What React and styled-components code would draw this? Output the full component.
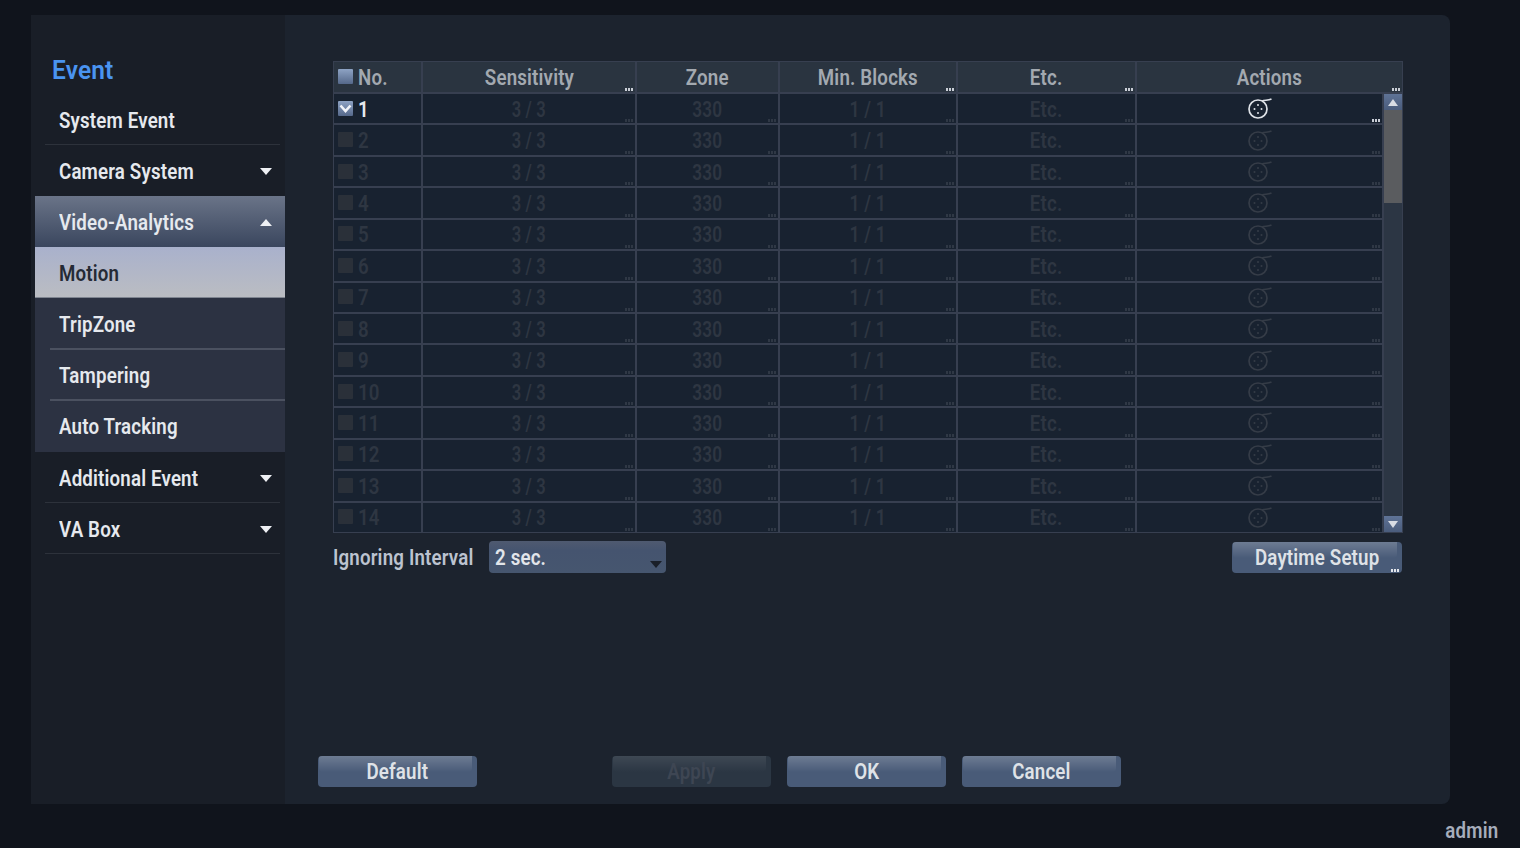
import styled, { createGlobalStyle } from "styled-components";

const COLUMNS = "87px 212px 141px 176px 177px 1fr";
const ROWS = Array.from({ length: 14 }, (_, i) => i + 1);

const GlobalStyle = createGlobalStyle`
  html, body {
    margin: 0;
    padding: 0;
    background: #10141c;
    overflow: hidden;
  }
  body {
    font-family: Roboto, "Liberation Sans", sans-serif;
  }
`;

const Screen = styled.div`
  width: 1520px;
  height: 848px;
  padding: 15px 70px 0 31px;
  box-sizing: border-box;
  position: relative;
`;

const Window = styled.div`
  display: flex;
  height: 789px;
  border-radius: 0 8px 8px 0;
  background: #1c232e;
  overflow: hidden;
`;

const Sidebar = styled.nav`
  width: 254px;
  flex: none;
  background: #191e27;
  padding: 29px 0 0 4px;
  box-sizing: border-box;
`;

const Squeezed = styled.span`
  display: inline-block;
  transform: scaleX(${(p) => p.$scale || 0.85});
  transform-origin: ${(p) => p.$origin || "left"} center;
  white-space: nowrap;
  letter-spacing: 0.2px;
`;

const SideTitle = styled.div`
  height: 50px;
  padding: 1px 0 0 17px;
  box-sizing: border-box;
  font-size: 26px;
  font-weight: 600;
  line-height: 50px;
  color: #4a94f0;
`;

const MenuItem = styled.div`
  position: relative;
  height: ${(p) => (p.$tall ? 52 : 51)}px;
  display: flex;
  align-items: center;
  justify-content: space-between;
  padding: 1px 13px 0 24px;
  box-sizing: border-box;
  font-size: 22px;
  font-weight: 600;
  color: #e6e9ee;

  ${(p) =>
    p.$variant === "open" &&
    `background: linear-gradient(#6a7488, #3a465e);`}
  ${(p) =>
    p.$variant === "selected" &&
    `background: linear-gradient(#a9b1cc, #bbbdc2);
     color: #252a35;
     box-shadow: inset 0 -1px 0 #7f8590;`}
  ${(p) => p.$variant === "sub" && `background: #2c3242;`}

  ${(p) =>
    p.$divider &&
    `&::after {
      content: "";
      position: absolute;
      z-index: 1;
      left: ${p.$variant === "sub" ? "15px" : "10px"};
      right: ${p.$variant === "sub" ? "0" : "5px"};
      bottom: ${p.$variant === "sub" ? "-1px" : "0"};
      height: ${p.$variant === "sub" ? "2px" : "1px"};
      background: ${p.$variant === "sub" ? "#4b5160" : "#2d323b"};
    }`}
`;

const Caret = styled.span`
  width: 0;
  height: 0;
  border-left: 6px solid transparent;
  border-right: 6px solid transparent;
  ${(p) => (p.$up ? "border-bottom" : "border-top")}: 7px solid #eef0f4;
`;

const Content = styled.main`
  flex: 1;
  position: relative;
  padding: 46px 47px 0 48px;
  box-sizing: border-box;
`;

const Table = styled.div`
  width: 1070px;
  height: 472px;
  display: flex;
  flex-direction: column;
  box-sizing: border-box;
  border: 1px solid #373f50;
  background: #373f50;
`;

const HeaderRow = styled.div`
  display: grid;
  grid-template-columns: ${COLUMNS};
  height: 30px;
  flex: none;
  gap: 0 2px;
  margin-bottom: 2px;
  background: #373f50;
`;

const HeaderCell = styled.div`
  position: relative;
  display: flex;
  align-items: center;
  justify-content: ${(p) => (p.$left ? "flex-start" : "center")};
  padding: 1px 0 0 ${(p) => (p.$left ? "4px" : "0")};
  gap: 5px;
  background: #2a3440;
  font-size: 22px;
  font-weight: 600;
  color: #a3a9b0;
`;

const Dots = styled.span`
  position: absolute;
  right: ${(p) => p.$right || 2}px;
  bottom: 1px;
  width: 8px;
  height: 3px;
  background-image: linear-gradient(90deg, ${(p) => p.$color} 2px, transparent 1px);
  background-size: 3px 3px;
`;

const Body = styled.div`
  flex: 1;
  display: flex;
  min-height: 0;
  gap: 2px;
`;

const Rows = styled.div`
  flex: 1;
  display: grid;
  grid-template-rows: repeat(14, 1fr);
  gap: 2px;
`;

const Row = styled.div`
  display: grid;
  grid-template-columns: ${COLUMNS};
  gap: 0 2px;
`;

const Cell = styled.div`
  position: relative;
  display: flex;
  align-items: center;
  justify-content: ${(p) => (p.$left ? "flex-start" : "center")};
  padding: ${(p) => (p.$icon ? "0" : "1px")} 0 ${(p) => (p.$icon ? "1px" : "0")} ${(p) => (p.$left ? "4px" : "0")};
  gap: 5px;
  background: #182230;
  font-size: 22px;
  font-weight: 600;
  color: ${(p) => (p.$active ? "#e6e9ee" : "#2e3642")};
`;

const Check = styled.span`
  width: 15px;
  height: 15px;
  flex: none;
  display: flex;
  align-items: center;
  justify-content: center;
  border-radius: 1px;
  margin-top: -2px;
  background: ${(p) =>
    p.$on ? "linear-gradient(#8ea3c4, #55688a)" : "#2a3039"};
`;

const Scrollbar = styled.div`
  width: 18px;
  flex: none;
  display: flex;
  flex-direction: column;
  background: #2c3644;
`;

const ScrollArrow = styled.div`
  height: 16px;
  flex: none;
  display: flex;
  align-items: center;
  justify-content: center;
  background: linear-gradient(#5f7396, #4a5c7c);
  margin-top: ${(p) => (p.$end ? "auto" : "0")};
`;

const ScrollThumb = styled.div`
  height: 93px;
  background: #5a5c5f;
`;

const Arrow = styled.span`
  width: 0;
  height: 0;
  border-left: 5px solid transparent;
  border-right: 5px solid transparent;
  ${(p) => (p.$up ? "border-bottom" : "border-top")}: 7px solid #d8dce4;
`;

const Options = styled.div`
  width: 1069px;
  display: flex;
  align-items: center;
  margin-top: 8px;
  height: 32px;
`;

const OptionLabel = styled.label`
  width: 156px;
  font-size: 22px;
  font-weight: 600;
  color: #bcc3d0;
`;

const Select = styled.div`
  position: relative;
  width: 177px;
  height: 32px;
  display: flex;
  align-items: center;
  padding-left: 6px;
  box-sizing: border-box;
  border-radius: 4px;
  background: linear-gradient(#4f5a70 0%, #45546f 30%, #46566f 100%);
  font-size: 22px;
  font-weight: 600;
  color: #e2e5ea;

  &::after {
    content: "";
    position: absolute;
    right: 4px;
    bottom: 5px;
    border-left: 6px solid transparent;
    border-right: 6px solid transparent;
    border-top: 7px solid #1a1f28;
  }
`;

const Button = styled.button`
  position: relative;
  width: ${(p) => p.$width || 159}px;
  height: 31px;
  align-self: flex-end;
  padding: 0;
  border: 0;
  border-radius: 4px;
  overflow: hidden;
  font-family: inherit;
  font-size: 22px;
  font-weight: 600;
  color: ${(p) => (p.disabled ? "#3e4653" : "#dfe2e7")};
  background: ${(p) => (p.disabled ? "#2b3643" : "#495b78")};

  &::before {
    content: "";
    position: absolute;
    left: 1px;
    right: 5px;
    top: 0;
    height: 16px;
    border-radius: 0 0 4px 4px;
    background: linear-gradient(
      rgba(255, 255, 255, ${(p) => (p.disabled ? 0.09 : 0.2)}),
      rgba(255, 255, 255, 0)
    );
  }
`;

const Spacer = styled.div`
  flex: 1;
`;

const Footer = styled.div`
  position: absolute;
  left: 33px;
  top: 741px;
  display: flex;
`;

const FooterGap = styled.div`
  width: ${(p) => p.$width}px;
`;

const UserName = styled.div`
  position: absolute;
  right: 22px;
  top: 818px;
  font-size: 22px;
  font-weight: 600;
  color: #a6adbb;
`;

const ReelIcon = ({ color }) => (
  <svg width="26" height="22" viewBox="0 0 26 22" fill="none">
    <circle cx="11" cy="12" r="9" stroke={color} strokeWidth="1.7" />
    <circle cx="11" cy="8" r="1" fill={color} />
    <circle cx="7.5" cy="12" r="1" fill={color} />
    <circle cx="14.5" cy="12" r="1" fill={color} />
    <circle cx="11" cy="16" r="1" fill={color} />
    <path d="M15 4 C18 3 21 3.5 24.5 2" stroke={color} strokeWidth="1.7" />
  </svg>
);

const CheckMark = () => (
  <svg width="13" height="9" viewBox="0 0 13 9" fill="none">
    <path d="M1.5 1.5 L6.5 7 L11.5 1.5" stroke="#f0f3f8" strokeWidth="2.6" />
  </svg>
);

const menu = [
  { label: "System Event", divider: true },
  { label: "Camera System", caret: "down" },
  { label: "Video-Analytics", caret: "up", variant: "open" },
  { label: "Motion", variant: "selected" },
  { label: "TripZone", variant: "sub", divider: true },
  { label: "Tampering", variant: "sub", divider: true },
  { label: "Auto Tracking", variant: "sub", tall: true },
  { label: "Additional Event", caret: "down", divider: true },
  { label: "VA Box", caret: "down", divider: true },
];

const headers = [
  { label: "Sensitivity", dots: true },
  { label: "Zone" },
  { label: "Min. Blocks", dots: true },
  { label: "Etc.", dots: true },
  { label: "Actions", dots: true },
];
const values = [
  { text: "3 / 3", scale: 0.75 },
  { text: "330", scale: 0.78 },
  { text: "1 / 1", scale: 0.8 },
  { text: "Etc.", scale: 0.85 },
];

const App = () => (
  <>
    <GlobalStyle />
    <Screen>
      <Window>
        <Sidebar>
          <SideTitle>
            <Squeezed $scale={0.94}>Event</Squeezed>
          </SideTitle>
          {menu.map((item) => (
            <MenuItem
              key={item.label}
              $variant={item.variant}
              $divider={item.divider}
              $tall={item.tall}
            >
              <Squeezed>{item.label}</Squeezed>
              {item.caret && <Caret $up={item.caret === "up"} />}
            </MenuItem>
          ))}
        </Sidebar>
        <Content>
          <Table>
            <HeaderRow>
              <HeaderCell $left>
                <Check $on />
                <Squeezed>No.</Squeezed>
              </HeaderCell>
              {headers.map((h) => (
                <HeaderCell key={h.label}>
                  <Squeezed $origin="center">{h.label}</Squeezed>
                  {h.dots && <Dots $color="#c9ced6" />}
                </HeaderCell>
              ))}
            </HeaderRow>
            <Body>
              <Rows>
                {ROWS.map((n) => {
                  const active = n === 1;
                  return (
                    <Row key={n}>
                      <Cell $left $active={active}>
                        <Check $on={active}>{active && <CheckMark />}</Check>
                        <Squeezed>{n}</Squeezed>
                      </Cell>
                      {values.map((v) => (
                        <Cell key={v.text}>
                          <Squeezed $origin="center" $scale={v.scale}>
                            {v.text}
                          </Squeezed>
                          <Dots $color="#2f3845" />
                        </Cell>
                      ))}
                      <Cell $icon>
                        <ReelIcon color={active ? "#dfe3e8" : "#353c47"} />
                        <Dots $color={active ? "#c9ced6" : "#2f3845"} />
                      </Cell>
                    </Row>
                  );
                })}
              </Rows>
              <Scrollbar>
                <ScrollArrow>
                  <Arrow $up />
                </ScrollArrow>
                <ScrollThumb />
                <ScrollArrow $end>
                  <Arrow />
                </ScrollArrow>
              </Scrollbar>
            </Body>
          </Table>
          <Options>
            <OptionLabel>
              <Squeezed>Ignoring Interval</Squeezed>
            </OptionLabel>
            <Select>
              <Squeezed>2 sec.</Squeezed>
            </Select>
            <Spacer />
            <Button $width={170}>
              <Squeezed $origin="center">Daytime Setup</Squeezed>
              <Dots $color="#e2e5ea" $right={3} />
            </Button>
          </Options>
          <Footer>
            <Button>
              <Squeezed $origin="center">Default</Squeezed>
            </Button>
            <FooterGap $width={135} />
            <Button disabled>
              <Squeezed $origin="center">Apply</Squeezed>
            </Button>
            <FooterGap $width={16} />
            <Button>
              <Squeezed $origin="center">OK</Squeezed>
            </Button>
            <FooterGap $width={16} />
            <Button>
              <Squeezed $origin="center">Cancel</Squeezed>
            </Button>
          </Footer>
        </Content>
      </Window>
      <UserName>
        <Squeezed $origin="right">admin</Squeezed>
      </UserName>
    </Screen>
  </>
);

export default App;
